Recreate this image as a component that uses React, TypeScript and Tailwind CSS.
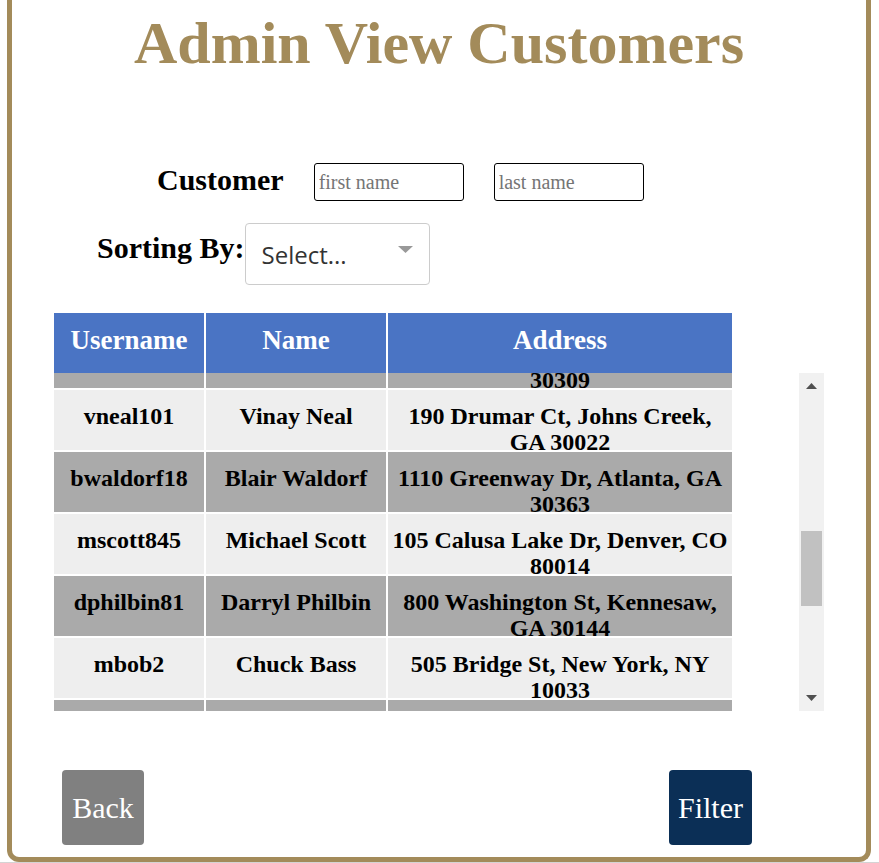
import React from 'react'

const customers = [
  { username: 'jdoe12', name: 'John Doe', address: '10 Tenth St NW, Atlanta, GA 30309' },
  { username: 'vneal101', name: 'Vinay Neal', address: '190 Drumar Ct, Johns Creek, GA 30022' },
  { username: 'bwaldorf18', name: 'Blair Waldorf', address: '1110 Greenway Dr, Atlanta, GA 30363' },
  { username: 'mscott845', name: 'Michael Scott', address: '105 Calusa Lake Dr, Denver, CO 80014' },
  { username: 'dphilbin81', name: 'Darryl Philbin', address: '800 Washington St, Kennesaw, GA 30144' },
  { username: 'mbob2', name: 'Chuck Bass', address: '505 Bridge St, New York, NY 10033' },
  { username: 'pbeesly9', name: 'Pam Beesly', address: '42 Scranton Ave, Scranton, PA 18503' },
]

const ArrowUp = () => (
  <svg width="11" height="6" viewBox="0 0 11 6">
    <polygon points="5.5,0 11,6 0,6" fill="#505050" />
  </svg>
)

const ArrowDown = () => (
  <svg width="11" height="6" viewBox="0 0 11 6">
    <polygon points="0,0 11,0 5.5,6" fill="#505050" />
  </svg>
)

const App = () => {
  return (
    <div className="[font-family:'Liberation_Serif',serif] bg-white w-[879px] h-[863px] overflow-hidden">
      <div className="ml-[7px] w-[864px] border-x-[5px] border-b-[5px] border-[#a38b5a] rounded-b-[12px] pt-[9px] pb-[12px]">
        <h1 className="text-center text-[60px] leading-[69px] font-bold text-[#a38b5a]">Admin View Customers</h1>

        <div className="flex items-center pl-[145px] mt-[85px]">
          <span className="pb-[4px] text-[30px] leading-[34px] font-bold text-black">Customer</span>
          <input
            placeholder="first name"
            className="ml-[30px] w-[150px] h-[38px] border border-black rounded-[3px] px-[4px] text-[20px] placeholder:text-[#757575] outline-none"
          />
          <input
            placeholder="last name"
            className="ml-[30px] w-[150px] h-[38px] border border-black rounded-[3px] px-[4px] text-[20px] placeholder:text-[#757575] outline-none"
          />
        </div>

        <div className="flex items-start pl-[85px] mt-[22px]">
          <span className="mt-[8px] text-[30px] leading-[34px] font-bold text-black">Sorting By:</span>
          <div className="w-[185px] h-[62px] border border-[#cccccc] rounded-[4px] flex items-start justify-between pl-[16px] pr-[16px]">
            <span className="mt-[14px] [font-family:'Open_Sans',sans-serif] text-[24px] leading-[34px] text-[#333333]">Select...</span>
            <svg className="mt-[22px]" width="15" height="7" viewBox="0 0 15 7">
              <polygon points="0,0 15,0 7.5,7" fill="#999999" />
            </svg>
          </div>
        </div>

        <div className="ml-[42px] mt-[28px] w-[770px]">
          <div className="flex gap-[2px] w-[678px] h-[60px]">
            <div className="w-[150px] pb-[5px] bg-[#4a74c4] flex items-center justify-center text-white font-bold text-[27px]">Username</div>
            <div className="w-[180px] pb-[5px] bg-[#4a74c4] flex items-center justify-center text-white font-bold text-[27px]">Name</div>
            <div className="flex-1 pb-[5px] bg-[#4a74c4] flex items-center justify-center text-white font-bold text-[27px]">Address</div>
          </div>

          <div className="flex h-[338px]">
            <div className="w-[678px] overflow-hidden">
              <div className="flex flex-col gap-[2px] -mt-[45px]">
                {customers.map((c, i) => (
                  <div key={c.username} className="flex gap-[2px] h-[60px] font-bold text-[24px] leading-[26px] text-black text-center">
                    <div className={`w-[150px] pt-[13px] px-[2px] overflow-hidden ${i % 2 === 0 ? 'bg-[#aaaaaa]' : 'bg-[#eeeeee]'}`}>{c.username}</div>
                    <div className={`w-[180px] pt-[13px] px-[2px] overflow-hidden ${i % 2 === 0 ? 'bg-[#aaaaaa]' : 'bg-[#eeeeee]'}`}>{c.name}</div>
                    <div className={`flex-1 pt-[13px] px-[2px] overflow-hidden ${i % 2 === 0 ? 'bg-[#aaaaaa]' : 'bg-[#eeeeee]'}`}>{c.address}</div>
                  </div>
                ))}
              </div>
            </div>

            <div className="ml-[67px] w-[25px] bg-[#f1f1f1] flex flex-col">
              <div className="h-[26px] flex items-center justify-center"><ArrowUp /></div>
              <div className="mt-[132px] mx-[2px] h-[75px] bg-[#c1c1c1]"></div>
              <div className="flex-1"></div>
              <div className="h-[26px] flex items-center justify-center"><ArrowDown /></div>
            </div>
          </div>
        </div>

        <div className="flex justify-between pl-[50px] pr-[114px] mt-[59px]">
          <button className="w-[82px] h-[75px] bg-[#808080] rounded-[4px] text-white text-[30px]">Back</button>
          <button className="w-[83px] h-[75px] bg-[#0b2f56] rounded-[4px] text-white text-[30px]">Filter</button>
        </div>
      </div>
      <div className="h-px bg-[#d4d4d4]"></div>
    </div>
  )
}

export default App
